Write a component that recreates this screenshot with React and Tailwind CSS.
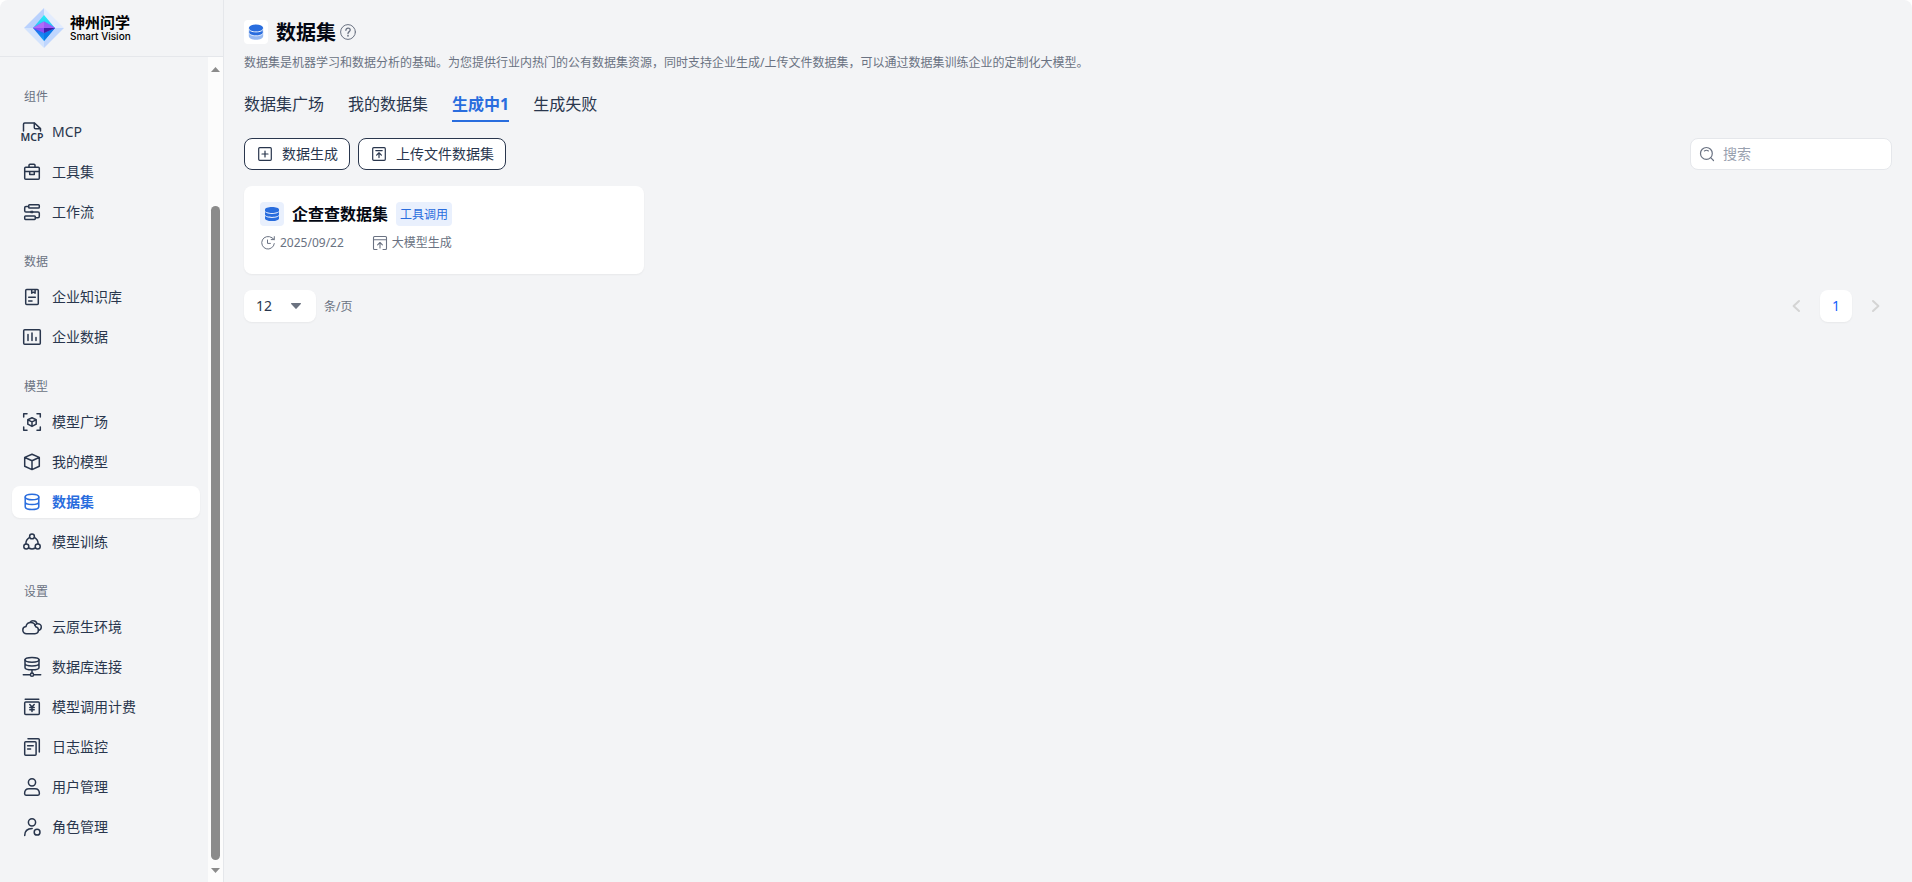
import React from "react";

function Icon({ children, size = "size-5", view = "0 0 20 20", stroke = "1.5" }) {
  return (
    <svg
      className={`${size} shrink-0 overflow-visible`}
      viewBox={view}
      fill="none"
      stroke="currentColor"
      strokeWidth={stroke}
      strokeLinecap="round"
      strokeLinejoin="round"
      aria-hidden="true"
    >
      {children}
    </svg>
  );
}

const icons = {
  mcp: (
    <>
      <path d="M1.5 9V2.2Q1.5 1 2.7 1H12.5L18.5 6.6V9" />
      <path d="M12.3 1.2V5.5Q12.3 6.8 13.6 6.8H18.3" />
      <text x="10" y="19.4" textAnchor="middle" fontSize="10.5" fontWeight="600" fill="currentColor" stroke="none">
        MCP
      </text>
    </>
  ),
  toolbox: (
    <>
      <rect x="2.7" y="5.2" width="14.6" height="12" rx="1" />
      <path d="M7 5V3.2Q7 2.2 8 2.2H12Q13 2.2 13 3.2V5M2.7 9.6H17.3M7.7 9.6V12.6H12.3V9.6" />
    </>
  ),
  flow: (
    <>
      <rect x="6.7" y="2.7" width="10.6" height="3.4" rx=".8" />
      <rect x="2.7" y="14" width="10.6" height="3.4" rx=".8" />
      <path d="M6.5 4.4H4Q2.7 4.4 2.7 5.7V8.7Q2.7 10 4 10H16Q17.3 10 17.3 11.3V14.2Q17.3 15.7 16 15.7H13.5" />
      <path d="M9 9.2H11V10.8H9Z" fill="currentColor" strokeWidth=".8" />
    </>
  ),
  book: (
    <>
      <rect x="3.7" y="2.6" width="12.6" height="14.8" rx="1" />
      <path d="M9.7 2.8V6.2L11.4 5.2L13.1 6.2V2.8M6.7 10.2H13.3M6.7 14H10" />
    </>
  ),
  chart: (
    <>
      <rect x="1.7" y="2.7" width="16.6" height="14.6" rx="1" />
      <path d="M6 7.5V13.5M10 6V13.5M14 10.5V13.5" />
    </>
  ),
  scan: (
    <>
      <path d="M1.7 5V1.7H5M15 1.7H18.3V5M18.3 15V18.3H15M5 18.3H1.7V15" />
      <path d="M10 5.7L14.2 7.7V12.2L10 14.4L5.8 12.2V7.7ZM5.9 7.8L10 9.8L14.1 7.8M10 9.8V14.2" />
    </>
  ),
  cube: <path d="M10 2.3L17.3 5.4V14.2L10 17.6L2.7 14.2V5.4ZM2.9 5.5L10 8.7L17.1 5.5M10 8.7V17.4" />,
  data: (
    <>
      <ellipse cx="10" cy="5" rx="6.8" ry="2.8" />
      <path d="M3.2 5V14.6C3.2 16.2 6 17.6 10 17.6S16.8 16.2 16.8 14.6V5M3.2 9.8C3.2 11.3 6 12.6 10 12.6S16.8 11.3 16.8 9.8" />
    </>
  ),
  train: (
    <>
      <circle cx="10" cy="4.4" r="2.4" />
      <circle cx="4.3" cy="14.6" r="2.5" />
      <circle cx="15.7" cy="14.6" r="2.5" />
      <path d="M7.6 5.4C5.2 6.8 3.8 9.2 3.9 12M12.4 5.4C14.8 6.8 16.2 9.2 16.1 12M6.6 16Q10 17.8 13.4 16" />
    </>
  ),
  cloud: (
    <>
      <path d="M4.6 16.7C2.3 16.7.8 15.2.8 13.1C.8 11.1 2.2 9.7 4 9.5C4.6 7 6.5 5.6 8.8 5.6C11.3 5.6 13.1 7.2 13.6 9.7C15.3 9.9 16.4 11.3 16.4 13.1C16.4 15.3 15 16.7 12.9 16.7Z" />
      <path d="M8 5.3C8.8 4.1 10.1 3.6 11.4 3.7C13.3 3.8 14.6 5 15 6.7C17.7 6.4 19.3 8 19.3 10C19.3 11.7 18.2 13 16.6 13.4M12.8 8.2Q13.6 7 15 6.7" />
    </>
  ),
  dbLink: (
    <>
      <ellipse cx="10" cy="2.8" rx="7" ry="2.4" />
      <path d="M3 2.8V10.4C3 11.8 6 12.8 10 12.8S17 11.8 17 10.4V2.8M3 6.6C3 8 6 9 10 9S17 8 17 6.6M10 13V16M1.3 17.7H8.4M11.6 17.7H18.7" />
      <circle cx="10" cy="17.7" r="1.6" />
    </>
  ),
  bill: (
    <>
      <path d="M3.2 2.3H16.8M7.8 7.6L10 10.1L12.2 7.6M10 10.1V14.6M7.8 10.6H12.2M7.8 12.7H12.2" />
      <rect x="2.7" y="5" width="14.6" height="12.4" rx="1" />
    </>
  ),
  log: (
    <>
      <rect x="2.7" y="4.8" width="11.4" height="13.4" rx="1" />
      <path d="M6 1.8H16.3Q17.3 1.8 17.3 2.8V15M5.6 8.8H11.2M5.6 12H8.6" />
    </>
  ),
  user: (
    <>
      <circle cx="10" cy="5.3" r="3.6" />
      <path d="M7 11.7H13C15.8 11.7 17.4 13.8 17.4 16.6Q17.4 18.2 16 18.2H4Q2.6 18.2 2.6 16.6C2.6 13.8 4.2 11.7 7 11.7Z" />
    </>
  ),
  role: (
    <>
      <circle cx="10" cy="5.3" r="3.6" />
      <circle cx="15.1" cy="15.2" r="2.9" />
      <path d="M2.7 18.4C2.7 14.4 5.4 11.6 10.2 11.4" />
    </>
  ),
};

const sections = [
  { title: "组件", items: [["mcp", "MCP"], ["toolbox", "工具集"], ["flow", "工作流"]] },
  { title: "数据", items: [["book", "企业知识库"], ["chart", "企业数据"]] },
  { title: "模型", items: [["scan", "模型广场"], ["cube", "我的模型"], ["data", "数据集"], ["train", "模型训练"]] },
  {
    title: "设置",
    items: [
      ["cloud", "云原生环境"],
      ["dbLink", "数据库连接"],
      ["bill", "模型调用计费"],
      ["log", "日志监控"],
      ["user", "用户管理"],
      ["role", "角色管理"],
    ],
  },
];

function Logo() {
  return (
    <a href="#" className="flex items-center gap-1.5">
      <svg className="size-10 shrink-0" viewBox="0 0 40 40" aria-hidden="true">
        <defs>
          <linearGradient id="gemTop" x1="0" y1="0" x2="0" y2="1">
            <stop offset="0" stopColor="#22f0f5" />
            <stop offset="1" stopColor="#35b8f8" />
          </linearGradient>
          <linearGradient id="gemLow" x1="0" y1="0" x2="0" y2="1">
            <stop offset="0" stopColor="#2563eb" />
            <stop offset="1" stopColor="#12a4f5" />
          </linearGradient>
        </defs>
        <path d="M20 0L0 20H20Z" fill="#b9d1fd" />
        <path d="M20 0L40 20H20Z" fill="#e3ecfd" />
        <path d="M0 20L20 40V20Z" fill="#d3e3fd" />
        <path d="M40 20L20 40V20Z" fill="#bfd6fe" />
        <path d="M20 7L9 20H31Z" fill="url(#gemTop)" />
        <path d="M9 20L20 33L31 20Z" fill="url(#gemLow)" />
        <path d="M20 23V33L31 20Z" fill="#0b7be8" />
        <path d="M9 20L20 13.5L31 20L20 25Z" fill="#8b4df5" />
        <path d="M20 13.5L9 20H20Z" fill="#b06bf8" />
        <path d="M20 13.5L31 20H20Z" fill="#9a5cf8" />
        <path d="M20 20H31L20 25Z" fill="#3f1fa8" />
      </svg>
      <span className="flex flex-col text-black">
        <span className="text-[15px] leading-4 font-bold">神州问学</span>
        <span className="font-['Inter','Noto_Sans',sans-serif] text-[10px] leading-3 font-medium">Smart Vision</span>
      </span>
    </a>
  );
}

function Sidebar() {
  return (
    <aside className="flex w-56 shrink-0 flex-col border-r border-gray-200">
      <div className="flex h-[57px] shrink-0 items-center border-b border-gray-200 pl-6">
        <Logo />
      </div>
      <div className="flex min-h-0 flex-1">
        <nav className="flex min-w-0 flex-1 flex-col gap-5 overflow-hidden pt-[26px] pr-2 pl-3">
          {sections.map((s) => (
            <section key={s.title} className="flex flex-col">
              <h2 className="mb-1.5 flex h-[27px] items-center pl-3 text-xs text-gray-500">{s.title}</h2>
              <ul className="flex flex-col gap-2">
                {s.items.map(([icon, label]) => {
                  const active = label === "数据集";
                  return (
                    <li key={label}>
                      <a
                        href="#"
                        aria-current={active ? "page" : undefined}
                        className={
                          active
                            ? "flex h-8 items-center gap-2.5 rounded-lg bg-white pl-2.5 text-sm font-bold text-[#296dde] shadow-xs"
                            : "flex h-8 items-center gap-2.5 rounded-lg pl-2.5 text-sm text-[#29364d]"
                        }
                      >
                        <Icon>{icons[icon]}</Icon>
                        <span>{label}</span>
                      </a>
                    </li>
                  );
                })}
              </ul>
            </section>
          ))}
        </nav>
        <div className="flex w-[15px] shrink-0 flex-col items-center bg-[#fcfcfc] pt-2.5 pb-[9px]" aria-hidden="true">
          <svg className="h-[5px] w-[9px] shrink-0" viewBox="0 0 9 5"><path d="M0 5L4.5 0L9 5Z" fill="#8b8b8b" /></svg>
          <div className="mt-[134px] mb-2 w-[9px] flex-1 rounded-full bg-[#8b8b8b]" />
          <svg className="h-[5px] w-[9px] shrink-0" viewBox="0 0 9 5"><path d="M0 0L4.5 5L9 0Z" fill="#8b8b8b" /></svg>
        </div>
      </div>
    </aside>
  );
}

function Tab({ label, active }) {
  return (
    <button
      type="button"
      role="tab"
      aria-selected={!!active}
      className={
        active
          ? "h-9 border-b-2 border-[#296dde] pt-0.5 text-base leading-8 font-bold text-[#296dde]"
          : "h-9 border-b-2 border-transparent pt-0.5 text-base leading-8 text-[#29364d]"
      }
    >
      {label}
    </button>
  );
}

function ActionButton({ icon, label }) {
  return (
    <button
      type="button"
      className="flex h-8 items-center gap-2.5 rounded-lg border border-[#29364d] bg-white pr-[11px] pl-[13px] text-sm text-[#29364d]"
    >
      <Icon size="size-3.5" view="0 0 14 14" stroke="1.2">{icon}</Icon>
      {label}
    </button>
  );
}

export default function App() {
  return (
    <div className="h-screen bg-white">
      <div className="flex h-full overflow-hidden rounded-t-lg bg-[#f3f4f6] font-['Noto_Sans','Noto_Sans_CJK_SC',sans-serif]">
        <Sidebar />
        <main className="flex min-w-0 flex-1 flex-col px-5 pt-5">
          <header>
            <div className="flex h-6 items-center">
              <span className="flex size-6 items-center justify-center rounded bg-white">
                <svg className="size-4" viewBox="0 0 16 16" aria-hidden="true">
                  <path d="M.8 8.6V12C.8 14.2 4 15.8 8 15.8S15.2 14.2 15.2 12V8.6Z" fill="#94b8f2" />
                  <path d="M.8 4V8.6C.8 10.4 4 11.8 8 11.8S15.2 10.4 15.2 8.6V4Z" fill="#296dde" stroke="#fff" strokeWidth=".8" />
                  <ellipse cx="8" cy="4" rx="7.2" ry="3.6" fill="#296dde" />
                  <path d="M.8 4.6C.8 6.6 4 7.9 8 7.9S15.2 6.6 15.2 4.6" fill="none" stroke="#fff" strokeWidth=".9" />
                </svg>
              </span>
              <h1 className="ml-2 h-6 text-xl leading-[26px] font-bold text-gray-950">数据集</h1>
              <button type="button" aria-label="帮助" className="ml-1 text-gray-500">
                <Icon size="size-4" view="0 0 16 16" stroke="1">
                  <circle cx="8" cy="8" r="7.4" />
                  <path d="M5.9 6.3C5.9 5 6.8 4.1 8.1 4.1S10.2 5 10.2 6.1C10.2 7.6 8 7.7 8 9.5" strokeWidth="1.3" />
                  <path d="M8 11.7V11.8" strokeWidth="1.7" />
                </Icon>
              </button>
            </div>
            <p className="mt-[11px] text-xs leading-4 text-gray-500">
              数据集是机器学习和数据分析的基础。为您提供行业内热门的公有数据集资源，同时支持企业生成/上传文件数据集，可以通过数据集训练企业的定制化大模型。
            </p>
          </header>

          <div role="tablist" className="mt-[15px] flex gap-6">
            <Tab label="数据集广场" />
            <Tab label="我的数据集" />
            <Tab label="生成中1" active />
            <Tab label="生成失败" />
          </div>

          <div className="mt-4 flex items-center gap-2">
            <ActionButton
              label="数据生成"
              icon={<><rect x=".7" y=".7" width="12.6" height="12.6" rx="1" /><path d="M4 7H10M7 4V10" /></>}
            />
            <ActionButton
              label="上传文件数据集"
              icon={<><rect x=".7" y=".7" width="12.6" height="12.6" rx="1" /><path d="M3.8 3.6H10.2M7 10.6V5.8M4.6 8.1L7 5.8L9.4 8.1" /></>}
            />
            <label className="ml-auto flex h-8 w-[202px] items-center gap-[9px] rounded-lg border border-gray-200 bg-white px-[9px] text-gray-500">
              <Icon size="size-3.5" view="0 0 14 14" stroke="1.2">
                <circle cx="6.4" cy="6.4" r="5.9" />
                <path d="M4.4 3.9Q6.4 2.6 8.4 3.9M10.7 10.7L13.5 13.5" />
              </Icon>
              <input
                type="search"
                aria-label="搜索"
                placeholder="搜索"
                className="w-full min-w-0 bg-transparent text-sm outline-none placeholder:text-gray-400"
              />
            </label>
          </div>

          <article className="mt-4 h-[88px] w-[400px] rounded-lg bg-white p-4 shadow-xs">
            <div className="flex h-6 items-center gap-2">
              <span className="flex size-6 shrink-0 items-center justify-center rounded bg-[#e9f0fd]">
                <svg className="size-3.5" viewBox="0 0 14 14" aria-hidden="true">
                  <g fill="#296dde">
                    <path d="M0 2.4C0 1.1 3.1 0 7 0S14 1.1 14 2.4V3.8C14 5.1 10.9 6 7 6S0 5.1 0 3.8Z" />
                    <path d="M0 5.1C1.3 6.4 4 7 7 7S12.7 6.4 14 5.1V7.6C14 9 10.9 10 7 10S0 9 0 7.6Z" />
                    <path d="M0 9.1C1.3 10.4 4 11 7 11S12.7 10.4 14 9.1V11.4C14 12.9 10.9 14 7 14S0 12.9 0 11.4Z" />
                  </g>
                </svg>
              </span>
              <h2 className="text-base font-bold text-gray-950">企查查数据集</h2>
              <span className="h-6 rounded bg-[#e9f0fd] px-1 text-xs leading-[26px] text-[#296dde]">工具调用</span>
            </div>
            <div className="mt-[9px] flex h-4 items-center gap-7 text-xs leading-4 text-gray-500">
              <span className="flex items-center gap-1">
                <Icon size="size-4" view="0 0 16 16" stroke="1">
                  <path d="M11.7 2.6A6.3 6.3 0 1 0 14.3 8.6M14.3 1.6V4.6H11.2M14.2 4.5L11.7 2.6" />
                  <path d="M7.5 5V8.4H10.4" />
                </Icon>
                2025/09/22
              </span>
              <span className="flex items-center gap-1">
                <Icon size="size-4" view="0 0 16 16" stroke="1.1">
                  <path d="M5 14.5H2.5Q1.5 14.5 1.5 13.5V2.5Q1.5 1.5 2.5 1.5H13.5Q14.5 1.5 14.5 2.5V13.5Q14.5 14.5 13.5 14.5H11M1.5 4.7H14.5" />
                  <path d="M8 13V7.6M5.6 9.8L8 7.5L10.4 9.8" />
                </Icon>
                大模型生成
              </span>
            </div>
          </article>

          <footer className="mt-4 flex h-8 items-center">
            <label className="flex items-center gap-2 text-xs text-gray-500">
              <span className="relative">
                <select
                  defaultValue="12"
                  className="h-8 w-[72px] appearance-none rounded-lg bg-white pl-3 text-sm text-[#29364d] shadow-xs outline-none"
                >
                  <option>12</option>
                  <option>24</option>
                  <option>48</option>
                </select>
                <svg className="pointer-events-none absolute top-[13px] right-[15px] h-1.5 w-2.5" viewBox="0 0 10 6" aria-hidden="true">
                  <path d="M.4 0H9.6Q10.2.4 9.8.9L5.6 5.6Q5 6.2 4.4 5.6L.2.9Q-.2.4.4 0Z" fill="#6b7280" />
                </svg>
              </span>
              <span className="pt-0.5">条/页</span>
            </label>
            <div className="ml-auto flex items-center gap-2">
              <button type="button" aria-label="上一页" disabled className="flex size-8 items-center justify-center text-[#d4d4d4]">
                <Icon size="size-3" view="0 0 12 12" stroke="2"><path d="M9 1L3.6 6L9 11" /></Icon>
              </button>
              <button type="button" className="size-8 rounded-lg bg-white text-sm text-blue-600 shadow-xs">1</button>
              <button type="button" aria-label="下一页" disabled className="flex size-8 items-center justify-center text-[#d4d4d4]">
                <Icon size="size-3" view="0 0 12 12" stroke="2"><path d="M3 1L8.4 6L3 11" /></Icon>
              </button>
            </div>
          </footer>
        </main>
      </div>
    </div>
  );
}
